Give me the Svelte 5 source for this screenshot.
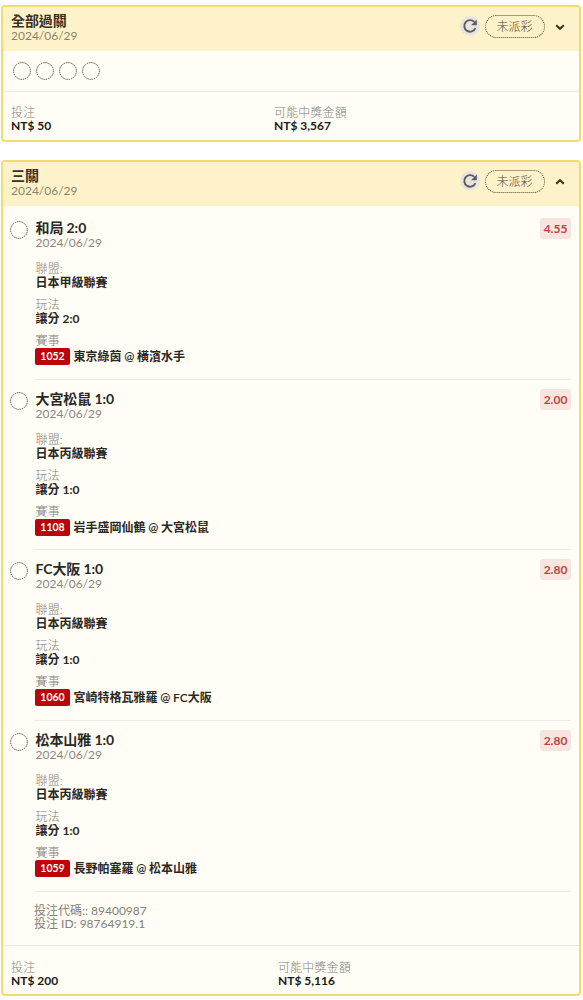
<script lang="ts">
  type Leg = {
    pick: string;
    odds: string;
    league: string;
    play: string;
    code: string;
    match: string;
  };

  const date = '2024/06/29';

  const legs: Leg[] = [
    { pick: '和局 2:0', odds: '4.55', league: '日本甲級聯賽', play: '讓分 2:0', code: '1052', match: '東京綠茵 @ 橫濱水手' },
    { pick: '大宮松鼠 1:0', odds: '2.00', league: '日本丙級聯賽', play: '讓分 1:0', code: '1108', match: '岩手盛岡仙鶴 @ 大宮松鼠' },
    { pick: 'FC大阪 1:0', odds: '2.80', league: '日本丙級聯賽', play: '讓分 1:0', code: '1060', match: '宮崎特格瓦雅羅 @ FC大阪' },
    { pick: '松本山雅 1:0', odds: '2.80', league: '日本丙級聯賽', play: '讓分 1:0', code: '1059', match: '長野帕塞羅 @ 松本山雅' },
  ];

  let firstOpen = $state(false);
  let secondOpen = $state(true);
</script>

{#snippet circle()}
  <svg class="circle" viewBox="0 0 18 18" aria-hidden="true">
    <circle cx="9" cy="9" r="8.4" />
  </svg>
{/snippet}

{#snippet header(title: string, open: boolean, toggle: () => void)}
  <header>
    <div class="heading">
      <h2>{title}</h2>
      <p class="date">{date}</p>
    </div>
    <button type="button" class="refresh" aria-label="重新整理">
      <svg viewBox="0 0 20 20">
        <path d="M14.2 5.8A5.8 5.8 0 1 0 15.4 12.2" />
        <path class="tip" d="M16.8 3.4V9.2H11Z" />
      </svg>
    </button>
    <span class="status">未派彩</span>
    <button type="button" class="toggle" class:open aria-label="展開" onclick={toggle}>
      <svg viewBox="0 0 10 10"><path d="M1.2 3.2L5 6.8L8.8 3.2" /></svg>
    </button>
  </header>
{/snippet}

{#snippet totals(stake: string, payout: string)}
  <div class="totals">
    <div class="field">
      <span class="label">投注</span>
      <span class="value">{stake}</span>
    </div>
    <div class="field">
      <span class="label">可能中獎金額</span>
      <span class="value">{payout}</span>
    </div>
  </div>
{/snippet}

<main>
  <section class="card">
    {@render header('全部過關', firstOpen, () => (firstOpen = !firstOpen))}
    <div class="dots">
      {#each legs as _}
        {@render circle()}
      {/each}
    </div>
    {@render totals('NT$ 50', 'NT$ 3,567')}
  </section>

  <section class="card detail">
    {@render header('三關', secondOpen, () => (secondOpen = !secondOpen))}
    {#if secondOpen}
      <div class="legs">
        {#each legs as leg}
          <article class="leg">
            {@render circle()}
            <div class="body">
              <div class="top">
                <div>
                  <h3>{leg.pick}</h3>
                  <p class="date">{date}</p>
                </div>
                <span class="odds">{leg.odds}</span>
              </div>
              <div class="info">
                <div class="field">
                  <span class="label">聯盟:</span>
                  <span class="value">{leg.league}</span>
                </div>
                <div class="field">
                  <span class="label">玩法</span>
                  <span class="value">{leg.play}</span>
                </div>
                <div class="field">
                  <span class="label">賽事</span>
                  <span class="match"><b class="code">{leg.code}</b>{leg.match}</span>
                </div>
              </div>
            </div>
          </article>
        {/each}
        <div class="ids">
          <p>投注代碼:: 89400987</p>
          <p>投注 ID: 98764919.1</p>
        </div>
      </div>
    {/if}
    {@render totals('NT$ 200', 'NT$ 5,116')}
  </section>
</main>

<style>
  :global(body) {
    margin: 0;
    background: #fff;
  }
  main {
    box-sizing: border-box;
    height: 1000px;
    padding: 5px 2px 4px 1px;
    font-family: Lato, 'Noto Sans CJK TC', sans-serif;
    font-size: 12px;
    color: #1c1a17;
    display: flex;
    flex-direction: column;
    gap: 18px;
  }
  h2,
  h3,
  p {
    margin: 0;
  }
  button {
    padding: 0;
    border: none;
    background: none;
    cursor: pointer;
  }
  svg {
    display: block;
    fill: none;
  }
  .card {
    border: 2px solid #f0df66;
    border-radius: 4px;
    background: #fffdf5;
    overflow: hidden;
    flex: none;
  }
  header {
    box-sizing: border-box;
    height: 44px;
    padding: 0 14.5px 0 8px;
    background: #fef2cb;
    display: flex;
    align-items: flex-start;
  }
  .heading {
    flex: 1;
    padding-top: 6px;
  }
  h2,
  h3 {
    font-size: 14px;
    line-height: 16px;
    font-weight: 700;
    letter-spacing: -0.1px;
  }
  h2 {
    color: #38321f;
  }
  h3 {
    color: #2a2824;
  }
  .date {
    line-height: 13px;
    color: #8b887f;
  }
  header .date {
    color: #8e8467;
  }
  .refresh {
    width: 20px;
    height: 20px;
    margin-top: 9px;
    border-radius: 50%;
    background: #e9e5dc;
  }
  .refresh svg {
    width: 20px;
    height: 20px;
    stroke: #5c5c63;
    stroke-width: 1.9;
  }
  .refresh .tip {
    fill: #5c5c63;
    stroke: none;
  }
  .status {
    box-sizing: border-box;
    width: 60px;
    height: 23px;
    margin: 8px 10px 0 5px;
    border: 1px dotted #4f4932;
    border-radius: 12px;
    color: #4f4932;
    font-weight: 300;
    line-height: 21px;
    text-align: center;
  }
  .toggle {
    margin-top: 15px;
  }
  .toggle svg {
    width: 10px;
    height: 10px;
    stroke: #38321f;
    stroke-width: 2;
  }
  .toggle.open svg {
    transform: rotate(180deg);
  }
  .circle {
    width: 18px;
    height: 18px;
    flex: none;
    stroke: #55534d;
    stroke-width: 1;
    stroke-dasharray: 1.4 0.8;
  }
  .dots {
    height: 40px;
    padding-left: 10px;
    display: flex;
    align-items: center;
    gap: 5px;
  }
  .totals {
    box-sizing: border-box;
    height: 49px;
    padding: 14px 8px 0;
    border-top: 1px solid #eeebe3;
    display: grid;
    grid-template-columns: 263px 1fr;
  }
  .detail .totals {
    padding-top: 15px;
    grid-template-columns: 267px 1fr;
  }
  .field {
    display: flex;
    flex-direction: column;
  }
  .label {
    line-height: 14px;
    font-weight: 300;
    color: #85827a;
    letter-spacing: 0.15px;
  }
  .value {
    line-height: 14px;
    font-weight: 700;
    color: #2a2824;
  }
  .totals .label,
  .totals .value {
    line-height: 13px;
  }
  .totals .value {
    color: #1c1a17;
  }
  .legs {
    padding: 3px 8px 0 7px;
  }
  .leg {
    box-sizing: border-box;
    height: 170.67px;
    padding-top: 11px;
    display: flex;
    gap: 7px;
  }
  .leg .circle {
    margin-top: 1px;
  }
  .body {
    flex: 1;
    margin-left: -1px;
    padding-left: 1.5px;
    border-bottom: 1px solid #eeebe3;
  }
  .top {
    display: flex;
    justify-content: space-between;
    align-items: flex-start;
  }
  .odds {
    box-sizing: border-box;
    width: 31px;
    height: 21px;
    margin-top: -2px;
    border-radius: 3px;
    background: #f9e5df;
    color: #c0443f;
    font-weight: 700;
    line-height: 21px;
    text-align: center;
  }
  .info {
    margin-top: 13px;
    display: flex;
    flex-direction: column;
    gap: 8px;
  }
  .match {
    font-weight: 600;
    color: #2a2824;
    display: flex;
    align-items: center;
    gap: 3.5px;
    line-height: 17px;
    word-spacing: -0.3px;
  }
  .code {
    width: 35px;
    margin-left: -0.5px;
    border-radius: 2px;
    background: #bb0509;
    color: #fff;
    font-size: 10.5px;
    font-weight: 700;
    text-align: center;
  }
  .ids {
    height: 53px;
    box-sizing: border-box;
    padding: 12px 0 0 24px;
    line-height: 13px;
    font-weight: 400;
    color: #85827a;
  }
</style>
